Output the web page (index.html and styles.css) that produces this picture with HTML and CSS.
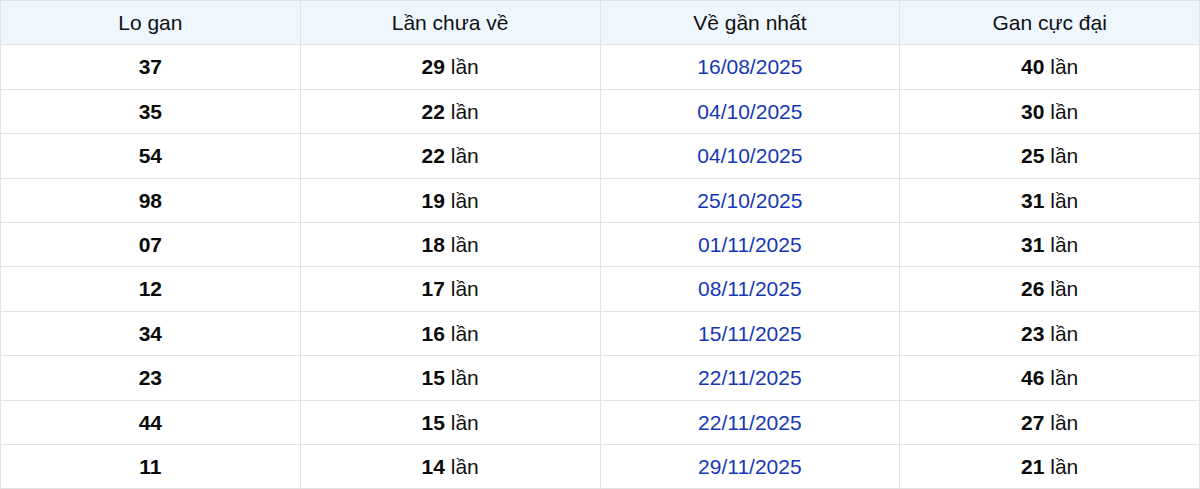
FILE: index.html
```html
<!DOCTYPE html>
<html lang="vi">
<head>
<meta charset="utf-8">
<title>Lo gan</title>
<link rel="stylesheet" href="styles.css">
</head>
<body>
<table class="gan-table">
  <thead>
    <tr><th>Lo gan</th><th>Lần chưa về</th><th>Về gần nhất</th><th>Gan cực đại</th></tr>
  </thead>
  <tbody>
    <tr><td><b>37</b></td><td><b>29</b> lần</td><td class="date">16/08/2025</td><td><b>40</b> lần</td></tr>
    <tr><td><b>35</b></td><td><b>22</b> lần</td><td class="date">04/10/2025</td><td><b>30</b> lần</td></tr>
    <tr><td><b>54</b></td><td><b>22</b> lần</td><td class="date">04/10/2025</td><td><b>25</b> lần</td></tr>
    <tr><td><b>98</b></td><td><b>19</b> lần</td><td class="date">25/10/2025</td><td><b>31</b> lần</td></tr>
    <tr><td><b>07</b></td><td><b>18</b> lần</td><td class="date">01/11/2025</td><td><b>31</b> lần</td></tr>
    <tr><td><b>12</b></td><td><b>17</b> lần</td><td class="date">08/11/2025</td><td><b>26</b> lần</td></tr>
    <tr><td><b>34</b></td><td><b>16</b> lần</td><td class="date">15/11/2025</td><td><b>23</b> lần</td></tr>
    <tr><td><b>23</b></td><td><b>15</b> lần</td><td class="date">22/11/2025</td><td><b>46</b> lần</td></tr>
    <tr><td><b>44</b></td><td><b>15</b> lần</td><td class="date">22/11/2025</td><td><b>27</b> lần</td></tr>
    <tr><td><b>11</b></td><td><b>14</b> lần</td><td class="date">29/11/2025</td><td><b>21</b> lần</td></tr>
  </tbody>
</table>
</body>
</html>
```
FILE: styles.css
```css
html, body {
  margin: 0;
  padding: 0;
  background: #ffffff;
}
body {
  font-family: "Liberation Sans", Arial, sans-serif;
  color: #111111;
}
.gan-table {
  width: 1200px;
  border-collapse: collapse;
  table-layout: fixed;
  font-size: 21px;
}
.gan-table th,
.gan-table td {
  border: 1px solid #e2e2e4;
  padding: 10px 8px;
  text-align: center;
  line-height: 23.4px;
}
.gan-table th {
  background: #eef6fe;
  font-weight: 400;
  color: #111111;
}
.gan-table td b {
  font-weight: 700;
  color: #0a0a0a;
}
.gan-table td.date {
  color: #1537b6;
}
```
